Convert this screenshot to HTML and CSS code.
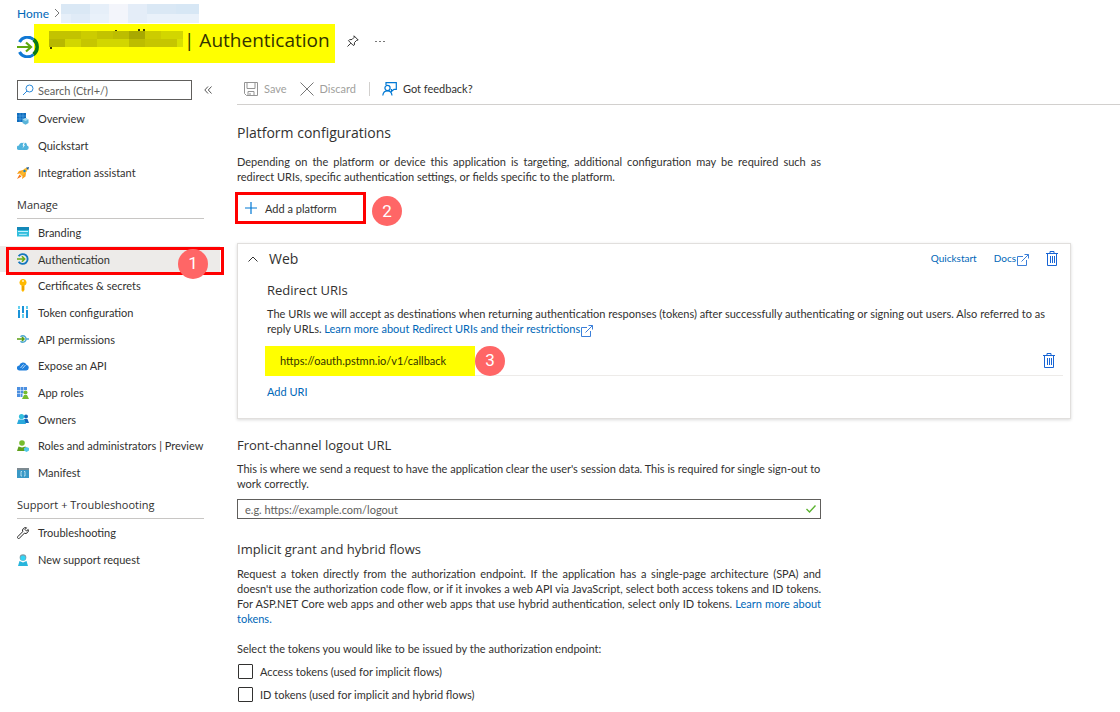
FILE: index.html
```
<!DOCTYPE html>
<html lang="en">
<head>
    <meta charset="UTF-8">
    <meta name="viewport" content="width=device-width, initial-scale=1.0">
    <title>Authentication</title>
    <link rel="stylesheet" href="styles.css">
</head>
<body>
    <header class="page-header">
        <nav class="breadcrumb">
            <a href="#">Home</a>
            <svg width="6" height="10" viewBox="0 0 6 10" fill="none" stroke="#777"><path d="M1 1l4 4-4 4"/></svg>
            <svg class="crumb-mask" width="138" height="19" viewBox="0 0 138 19" shape-rendering="crispEdges">
                <path fill="#dae8f5" d="M0 0h29v10H0zM86 0h29v10H86z"/>
                <path fill="#e6eff9" d="M29 0h19v10H29zM0 10h10v9H0z"/>
                <path fill="#f3f5fb" d="M48 0h19v19H48z"/>
                <path fill="#e4edf8" d="M67 0h19v19H67z"/>
                <path fill="#d7e7f5" d="M115 0h23v10h-23z"/>
                <path fill="#e0ebf7" d="M10 10h19v9H10z"/>
                <path fill="#e9f1fa" d="M29 10h19v9H29zM86 10h52v9H86z"/>
            </svg>
        </nav>
        <div class="title-row">
            <svg class="title-icon" width="22" height="22" viewBox="0 0 22 22" fill="none">
                <path d="M2.500 6a9 9 0 0 1 14-2.500" stroke="#0f78d4" stroke-width="3"/>
                <path d="M2.500 16a9 9 0 0 0 14 2.500" stroke="#0f78d4" stroke-width="3"/>
                <path d="M16.500 3.500a9.500 9.500 0 0 1 0 15" stroke="#0a7a16" stroke-width="3.500"/>
                <path d="M0 11h13M9 6.500l5 4.500-5 4.500" stroke="#5ea80e" stroke-width="2.200"/>
            </svg>
            <h1 class="title">
                <svg width="134" height="22" viewBox="0 0 134 22" shape-rendering="crispEdges">
                    <path fill="#3a3a00" d="M66 1h2v2h-2zM89 0h2v3h-2zM94 0h2v3h-2zM1 17h2v3H1z"/>
                    <path fill="#c3c300" d="M0 2h32v8H0zM48 2h16v8H48z"/>
                    <path fill="#cccc00" d="M32 2h16v8H32zM96 2h16v8H96z"/>
                    <path fill="#bdbd00" d="M64 2h16v8H64zM80 10h16v8H80z"/>
                    <path fill="#a9a900" d="M80 2h16v8H80z"/>
                    <path fill="#b8b800" d="M0 10h16v8H0z"/>
                    <path fill="#d2d600" d="M112 2h22v8h-22zM16 10h16v8H16zM48 10h32v8H48z"/>
                    <path fill="#c6c600" d="M32 10h16v8H32zM96 10h32v8H96z"/>
                    <path fill="#d8e000" d="M128 10h6v8h-6z"/>
                </svg>
                <span>| Authentication</span>
            </h1>
            <button class="icon-button pin" aria-label="Pin">
                <svg width="12" height="12" viewBox="0 0 12 12" fill="none" stroke="#333"><path d="M7 .8L11.200 5l-1.500.3-2.200 2.200L7.300 10 6.300 10.500 1.500 5.700l1-1 2.500-.2 2.200-2.200zM3.800 8.200L.5 11.500"/></svg>
            </button>
            <button class="icon-button more" aria-label="More">
                <svg width="12" height="4" viewBox="0 0 12 4" fill="#777"><path d="M1 1h2v1H1zM5 1h2v1H5zM9 1h2v1H9z"/></svg>
            </button>
        </div>
    </header>

    <div class="layout">
        <aside class="sidebar">
            <div class="search-row">
                <div class="search">
                    <svg width="12" height="12" viewBox="0 0 12 12" fill="none" stroke="#2b88d8"><circle cx="7.500" cy="4.500" r="3.500"/><path d="M5 7L1 11"/></svg>
                    <input type="text" placeholder="Search (Ctrl+/)" aria-label="Search">
                </div>
                <button class="icon-button" aria-label="Collapse menu">
                    <svg width="8" height="8" viewBox="0 0 8 8" fill="none" stroke="#555"><path d="M4 .5L.8 4 4 7.500M7.500.5L4.300 4l3.200 3.500"/></svg>
                </button>
            </div>

            <ul class="menu menu-top">
                <li><a href="#">
                    <svg width="12" height="12" viewBox="0 0 12 12"><path fill="#0f6cbd" d="M0 0h9v9H0z"/><path stroke="#6ab4ee" stroke-width=".5" d="M3 0v9M6 0v9M0 3h9M0 6h9"/><path fill="#59b4d9" d="M8.500 5l3 1.500v3.500l-3 1.700L5.500 10V6.500z"/><path fill="#a5dcf2" d="M8.500 5l3 1.500-3 1.500-3-1.500z"/></svg>
                    Overview</a></li>
                <li><a href="#">
                    <svg width="12" height="12" viewBox="0 0 12 12"><path fill="#4fb3dc" d="M2 10a2.200 2.200 0 0 1 0-4.500A3 3 0 0 1 6 3l1-.5A3 3 0 0 1 10 5.500a2.300 2.300 0 0 1-.2 4.500z"/><path fill="#fff" d="M7 2L5.500 5.500h1L5.500 8.500 8 5H7l1-3z"/></svg>
                    Quickstart</a></li>
                <li><a href="#">
                    <svg width="12" height="12" viewBox="0 0 12 12"><path fill="#f9a11b" d="M6 3L2 4 0 7l3-.5L5.500 9 5 12l3.500-2.500L9 6z"/><path fill="#f4771a" d="M2.500 7.500L0 12l4.500-2.500z"/><path fill="#fcb92c" d="M3 7l4-5 3-1.500 1 1L9.500 5 5 9z"/><path fill="#175b9d" d="M9 .8L12 0l-.8 3z"/><circle cx="7.500" cy="4" r="1.200" fill="#1380c4"/></svg>
                    Integration assistant</a></li>
            </ul>

            <h2 class="menu-title">Manage</h2>
            <ul class="menu menu-manage">
                <li><a href="#">
                    <svg width="12" height="12" viewBox="0 0 12 12"><path fill="#32bedd" d="M0 1h12v9.500H0z"/><path fill="#1488b8" d="M0 1h12v3H0z"/><path fill="#c3f1ff" d="M1 5h10v1H1z"/><path fill="none" stroke="#e2f8ff" stroke-width=".8" d="M2 8l1 .7L4 8l1 .7L6 8l1 .7L8 8l1 .7.8-.7"/></svg>
                    Branding</a></li>
                <li class="selected"><a href="#">
                    <svg width="12" height="12" viewBox="0 0 22 22" fill="none"><path d="M3 6a9 9 0 1 1 0 10" stroke="#1678be" stroke-width="3.500"/><path d="M0 11h13M9 6l5 5-5 5" stroke="#6aab16" stroke-width="3"/></svg>
                    Authentication</a>
                    <span class="step step-one">1</span></li>
                <li><a href="#">
                    <svg width="12" height="13" viewBox="0 0 12 13"><path fill="#ffb900" d="M6 0a3.400 3.400 0 0 1 1.500 6.500V11L6 13l-1.500-1.500V6.500A3.400 3.400 0 0 1 6 0z"/><circle cx="6" cy="2" r="1" fill="#fff3c4"/><path fill="#d98c00" d="M5.500 7h1v4h-1z"/></svg>
                    Certificates &amp; secrets</a></li>
                <li><a href="#">
                    <svg width="12" height="12" viewBox="0 0 12 12"><path fill="#1b93d8" d="M1 4h2v8H1zM5 0h2v7H5zM9 4h2v8H9z"/><path fill="#62cff0" d="M1 0h2v3H1zM5 8h2v4H5zM9 0h2v3H9z"/></svg>
                    Token configuration</a></li>
                <li><a href="#">
                    <svg width="12" height="12" viewBox="0 0 12 12" fill="none"><path stroke="#4fa9d2" stroke-width="1.500" d="M3.500 3.800a3.200 3.200 0 1 1 0 4.400M9.500 6H12"/><path stroke="#5a9f12" stroke-width="1.500" d="M0 6h7M5 4l2 2-2 2"/></svg>
                    API permissions</a></li>
                <li><a href="#">
                    <svg width="12" height="12" viewBox="0 0 12 12"><path fill="#1f7fdc" d="M2.500 10.500a2.500 2.500 0 0 1-.2-5A3.800 3.800 0 0 1 9.500 4.800a2.900 2.900 0 0 1-.2 5.700z"/><path fill="none" stroke="#b9dcfa" d="M3.500 8l3-3.500M5.500 8.500l3-3.500"/></svg>
                    Expose an API</a></li>
                <li><a href="#">
                    <svg width="12" height="12" viewBox="0 0 12 12"><path fill="#4b8fe0" d="M0 0h3v3H0zM3.500 0h3v3h-3zM7 0h3v3H7zM0 3.500h3v3H0zM3.500 3.500h3v3h-3zM0 7h3v3H0zM3.500 7h2v3h-2z"/><circle cx="8.500" cy="5.500" r="2" fill="#76bc2d"/><path fill="#76bc2d" d="M5 12l2-4h3l2 4z"/></svg>
                    App roles</a></li>
                <li><a href="#">
                    <svg width="12" height="12" viewBox="0 0 12 12"><circle cx="9" cy="3.500" r="2" fill="#1467b8"/><path fill="#1467b8" d="M7 6h3.500l1.500 4H8z"/><circle cx="4.500" cy="3.500" r="2.600" fill="#32bedd"/><path fill="#2aa9dc" d="M0 11l1.500-4.500h6L9 11z"/></svg>
                    Owners</a></li>
                <li><a href="#">
                    <svg width="12" height="12" viewBox="0 0 12 12"><circle cx="5" cy="3" r="2.800" fill="#76bc2d"/><path fill="#5ea01c" d="M0 11l1.500-4.500L5 7.500l3.500-1L10 11z"/><path fill="#50c8e8" d="M9.500 7l2.500 1v2.500L9.500 12 7 10.500V8z"/></svg>
                    Roles and administrators | Preview</a></li>
                <li><a href="#">
                    <svg width="12" height="12" viewBox="0 0 12 12"><path fill="#3999c6" d="M0 1h12v10H0z"/><path fill="#7d8a91" d="M0 1h12v2H0z"/><path fill="none" stroke="#d3edf8" stroke-width=".8" d="M5 4.500H4V9h1M7 4.500h1V9H7"/></svg>
                    Manifest</a></li>
            </ul>

            <h2 class="menu-title">Support + Troubleshooting</h2>
            <ul class="menu menu-support">
                <li><a href="#">
                    <svg width="12" height="12" viewBox="0 0 12 12" fill="none" stroke="#222"><path d="M9.500.8A3 3 0 0 0 5.700 4.700L.8 9.600a1 1 0 0 0 1.600 1.600l4.900-4.900a3 3 0 0 0 3.900-3.800L9.500 4 8 2.500z"/></svg>
                    Troubleshooting</a></li>
                <li><a href="#">
                    <svg width="12" height="12" viewBox="0 0 12 12"><circle cx="6" cy="3.500" r="3.300" fill="#7c9aa6"/><circle cx="6" cy="4" r="2.600" fill="#32d4f5"/><path fill="#28b5dc" d="M1 12l1.500-5L6 8.500 9.500 7l1.500 5z"/></svg>
                    New support request</a></li>
            </ul>
        </aside>

        <main class="content">
            <div class="toolbar">
                <button class="command" disabled>
                    <svg width="14" height="14" viewBox="0 0 14 14" fill="none" stroke="#949494"><path d="M.5.5h13v13H2.500l-2-2zM3 .5v6h8v-6M4 13.500v-4h6v4M6 11v2.500"/></svg>
                    Save</button>
                <button class="command" disabled>
                    <svg width="14" height="14" viewBox="0 0 14 14" fill="none" stroke="#777"><path d="M.5.5l13 13M13.500.5l-13 13"/></svg>
                    Discard</button>
                <span class="divider"></span>
                <button class="command">
                    <svg width="15" height="14" viewBox="0 0 15 14" fill="none" stroke="#0078d4" stroke-width="1.200"><path d="M4 3V.7h10.300v6.600H12L9.500 9.500V7"/><circle cx="5.500" cy="6" r="2.600"/><path d="M.8 13.500c.3-3 2-4.700 4.700-4.700s4.200 1.700 4.500 4.700"/></svg>
                    Got feedback?</button>
            </div>

            <section class="platforms">
                <h2>Platform configurations</h2>
                <p>Depending on the platform or device this application is targeting, additional configuration may be required such as redirect URIs, specific authentication settings, or fields specific to the platform.</p>
                <div class="add-row">
                    <button class="add-platform">
                        <svg width="12" height="12" viewBox="0 0 12 12" stroke="#0078d4" stroke-width="1.200"><path d="M6 0v12M0 6h12"/></svg>
                        Add a platform</button>
                    <span class="step">2</span>
                </div>
            </section>

            <section class="card">
                <div class="card-head">
                    <svg width="10" height="6" viewBox="0 0 10 6" fill="none" stroke="#333"><path d="M.5 5.500L5 1l4.500 4.500"/></svg>
                    <h2>Web</h2>
                    <a href="#">Quickstart</a>
                    <a class="external" href="#">Docs<svg width="12" height="12" viewBox="0 0 12 12" fill="none" stroke="#3b7fd9"><path d="M6 2.500H.5v9h9V6M4.500 7.500l7-7M7.500.5h4v4"/></svg></a>
                    <button class="icon-button" aria-label="Delete platform">
                        <svg width="12" height="15" viewBox="0 0 12 15" fill="none" stroke="#1764d4"><path d="M0 2.500h12M4 2.500v-2h4v2M1.500 2.500v12h9v-12M4.500 5v7M6.500 5v7M8.500 5v7"/></svg>
                    </button>
                </div>
                <div class="card-body">
                    <h3>Redirect URIs</h3>
                    <p>The URIs we will accept as destinations when returning authentication responses (tokens) after successfully authenticating or signing out users. Also referred to as reply URLs. <a class="external" href="#">Learn more about Redirect URIs and their restrictions<svg width="12" height="12" viewBox="0 0 12 12" fill="none" stroke="#3b7fd9"><path d="M6 2.500H.5v9h9V6M4.500 7.500l7-7M7.500.5h4v4"/></svg></a></p>
                    <div class="uri-row">
                        <input class="uri" type="text" value="https://oauth.pstmn.io/v1/callback" aria-label="Redirect URI">
                        <span class="step">3</span>
                        <button class="icon-button" aria-label="Delete URI">
                            <svg width="12" height="15" viewBox="0 0 12 15" fill="none" stroke="#1764d4"><path d="M0 2.500h12M4 2.500v-2h4v2M1.500 2.500v12h9v-12M4.500 5v7M6.500 5v7M8.500 5v7"/></svg>
                        </button>
                    </div>
                    <a href="#">Add URI</a>
                </div>
            </section>

            <section class="logout">
                <h3><label for="logout-url">Front-channel logout URL</label></h3>
                <p>This is where we send a request to have the application clear the user's session data. This is required for single sign-out to work correctly.</p>
                <div class="logout-field">
                    <input type="text" id="logout-url" placeholder="e.g. https://example.com/logout">
                    <svg width="10" height="8" viewBox="0 0 10 8" fill="none" stroke="#5bb32f" stroke-width="1.400"><path d="M.5 4l3 3 6-6.500"/></svg>
                </div>
            </section>

            <section class="implicit">
                <h3>Implicit grant and hybrid flows</h3>
                <p>Request a token directly from the authorization endpoint. If the application has a single-page architecture (SPA) and doesn't use the authorization code flow, or if it invokes a web API via JavaScript, select both access tokens and ID tokens. For ASP.NET Core web apps and other web apps that use hybrid authentication, select only ID tokens. <a href="#">Learn more about tokens.</a></p>
                <p class="prompt">Select the tokens you would like to be issued by the authorization endpoint:</p>
                <label class="check"><input type="checkbox"> Access tokens (used for implicit flows)</label>
                <label class="check"><input type="checkbox"> ID tokens (used for implicit and hybrid flows)</label>
            </section>
        </main>
    </div>
</body>
</html>
```
FILE: styles.css
```
* {
    box-sizing: border-box;
}
body {
    margin: 0;
    background: #fff;
    color: #323130;
    font-family: Lato, "Open Sans", sans-serif;
    font-size: 11px;
    line-height: 15px;
}
h1, h2, h3, p, ul {
    margin: 0;
    padding: 0;
    font-weight: normal;
}
h1, h2, h3 {
    font-family: "Open Sans", "Noto Sans", sans-serif;
}
svg {
    flex: none;
}
a {
    color: #0067b8;
    text-decoration: none;
}
button, input {
    font: inherit;
    color: inherit;
}
button {
    border: 0;
    padding: 0;
    background: none;
    cursor: pointer;
}
.icon-button {
    display: flex;
}

/* header */
.page-header {
    padding-left: 17px;
}
.breadcrumb {
    display: flex;
    align-items: center;
    gap: 5px;
    height: 24px;
    padding-top: 2px;
    font-size: 12px;
}
.crumb-mask {
    margin-left: -4px;
}
.title-row {
    display: flex;
    align-items: center;
}
.title-icon {
    position: relative;
    margin-top: 7px;
    margin-right: -5px;
}
.title {
    display: flex;
    align-items: center;
    gap: 1px;
    height: 39px;
    padding: 0 5px 8px 15px;
    background: #ff0;
    color: #333300;
    font-size: 19px;
    line-height: 28px;
}
.pin {
    margin: 0 15px 6px 12px;
}
.more {
    margin-bottom: 4px;
}

/* side menu */
.layout {
    display: flex;
}
.sidebar {
    flex: none;
    width: 220px;
    padding-top: 17px;
}
.search-row {
    display: flex;
    align-items: center;
    gap: 12px;
    margin-bottom: 5px;
    padding-left: 17px;
}
.search {
    display: flex;
    align-items: center;
    gap: 4px;
    width: 175px;
    height: 20px;
    padding-left: 4px;
    border: 1px solid #605e5c;
}
.search input {
    width: 100%;
    padding: 0;
    border: 0;
    outline: 0;
}
input::placeholder {
    color: #605e5c;
    opacity: 1;
}
.menu {
    display: grid;
    grid-auto-rows: minmax(26px, 1fr);
    list-style: none;
}
.menu-top {
    min-height: 81px;
}
.menu-manage {
    min-height: 267px;
}
.menu-support {
    min-height: 54px;
}
.menu li {
    position: relative;
    display: grid;
}
.menu a {
    display: flex;
    align-items: center;
    gap: 9px;
    padding-left: 17px;
    color: #323130;
    white-space: nowrap;
}
.menu-title {
    margin: 11px 16px 0 17px;
    padding-bottom: 6px;
    border-bottom: 1px solid #c8c6c4;
    font-size: 11px;
}
.menu .selected {
    background: #edebe9;
}
.selected::after {
    content: "";
    position: absolute;
    inset: 1px -4px -3px 6px;
    border: 3px solid #f00;
}
.step {
    display: flex;
    flex: none;
    align-items: center;
    justify-content: center;
    width: 30px;
    height: 30px;
    border-radius: 50%;
    background: #ff6666;
    color: #fff;
    font-family: Roboto, sans-serif;
    font-size: 17px;
}
.step-one {
    position: absolute;
    z-index: 1;
    top: 3px;
    left: 178px;
}

/* content */
.content {
    flex: 1;
    padding-left: 17px;
}
.content h2, .content h3 {
    color: #323130;
}
.content h2 {
    font-size: 14px;
    line-height: 20px;
}
.content h3 {
    font-size: 13px;
    line-height: 18px;
}
.toolbar {
    display: flex;
    align-items: center;
    height: 42px;
    padding: 10px 0 0 7px;
    border-bottom: 1px solid #d2d0ce;
}
.command {
    display: flex;
    align-items: center;
    gap: 6px;
    margin-right: 13px;
}
.command:disabled {
    color: #a19f9d;
}
.divider {
    width: 1px;
    height: 14px;
    margin-right: 12px;
    background: #d2d0ce;
}
.platforms, .logout, .implicit {
    max-width: 584px;
}
.platforms {
    padding-top: 18px;
}
.platforms p {
    margin: 11px 0 8px;
    text-align: justify;
}
.add-row {
    display: flex;
    align-items: flex-start;
    gap: 6px;
    margin-left: -2px;
}
.add-row .step {
    margin-top: 4px;
}
.add-platform {
    display: flex;
    align-items: center;
    gap: 8px;
    width: 131px;
    height: 32px;
    padding-left: 7px;
    border: 3px solid #f00;
}
.card {
    max-width: 834px;
    margin: 17px 0 17px;
    padding-bottom: 19px;
    border: 1px solid #e1dfdd;
    box-shadow: 0 1px 3px rgba(0, 0, 0, 0.15);
}
.card-head {
    display: flex;
    align-items: center;
    gap: 17px;
    height: 29px;
    padding: 0 12px 0 10px;
}
.card-head h2 {
    flex: 1;
    margin-left: -6px;
}
.card-head a {
    font-size: 10px;
}
.external svg {
    margin-left: 1px;
    vertical-align: -4px;
}
.card-body {
    padding: 8px 7px 0 29px;
}
.card-body p {
    margin: 7px 12px 9px 0;
}
.uri-row {
    display: flex;
    align-items: center;
    height: 30px;
    margin: 0 0 8px -2px;
    border-bottom: 1px solid #edebe9;
}
.uri {
    width: 210px;
    height: 30px;
    padding: 0 15px;
    border: 0;
    background: #ff0;
    color: #333300;
}
.uri-row .icon-button {
    margin: 0 8px 0 auto;
}
.logout p {
    margin: 7px 0 8px;
}
.logout-field {
    display: flex;
    align-items: center;
    height: 20px;
    padding: 0 4px 0 7px;
    border: 1px solid #605e5c;
}
.logout-field input {
    flex: 1;
    padding: 0;
    border: 0;
    outline: 0;
}
.implicit {
    padding-top: 21px;
}
.implicit p {
    margin: 8px 0 15px;
    text-align: justify;
}
.implicit .prompt {
    margin-bottom: 8px;
}
.check {
    display: flex;
    align-items: center;
    gap: 7px;
    margin-bottom: 8px;
    padding-left: 1px;
}
.check input {
    appearance: none;
    width: 15px;
    height: 15px;
    margin: 0;
    border: 1px solid #323130;
    border-radius: 1px;
}
.check input:checked {
    background: #0078d4;
}
```
